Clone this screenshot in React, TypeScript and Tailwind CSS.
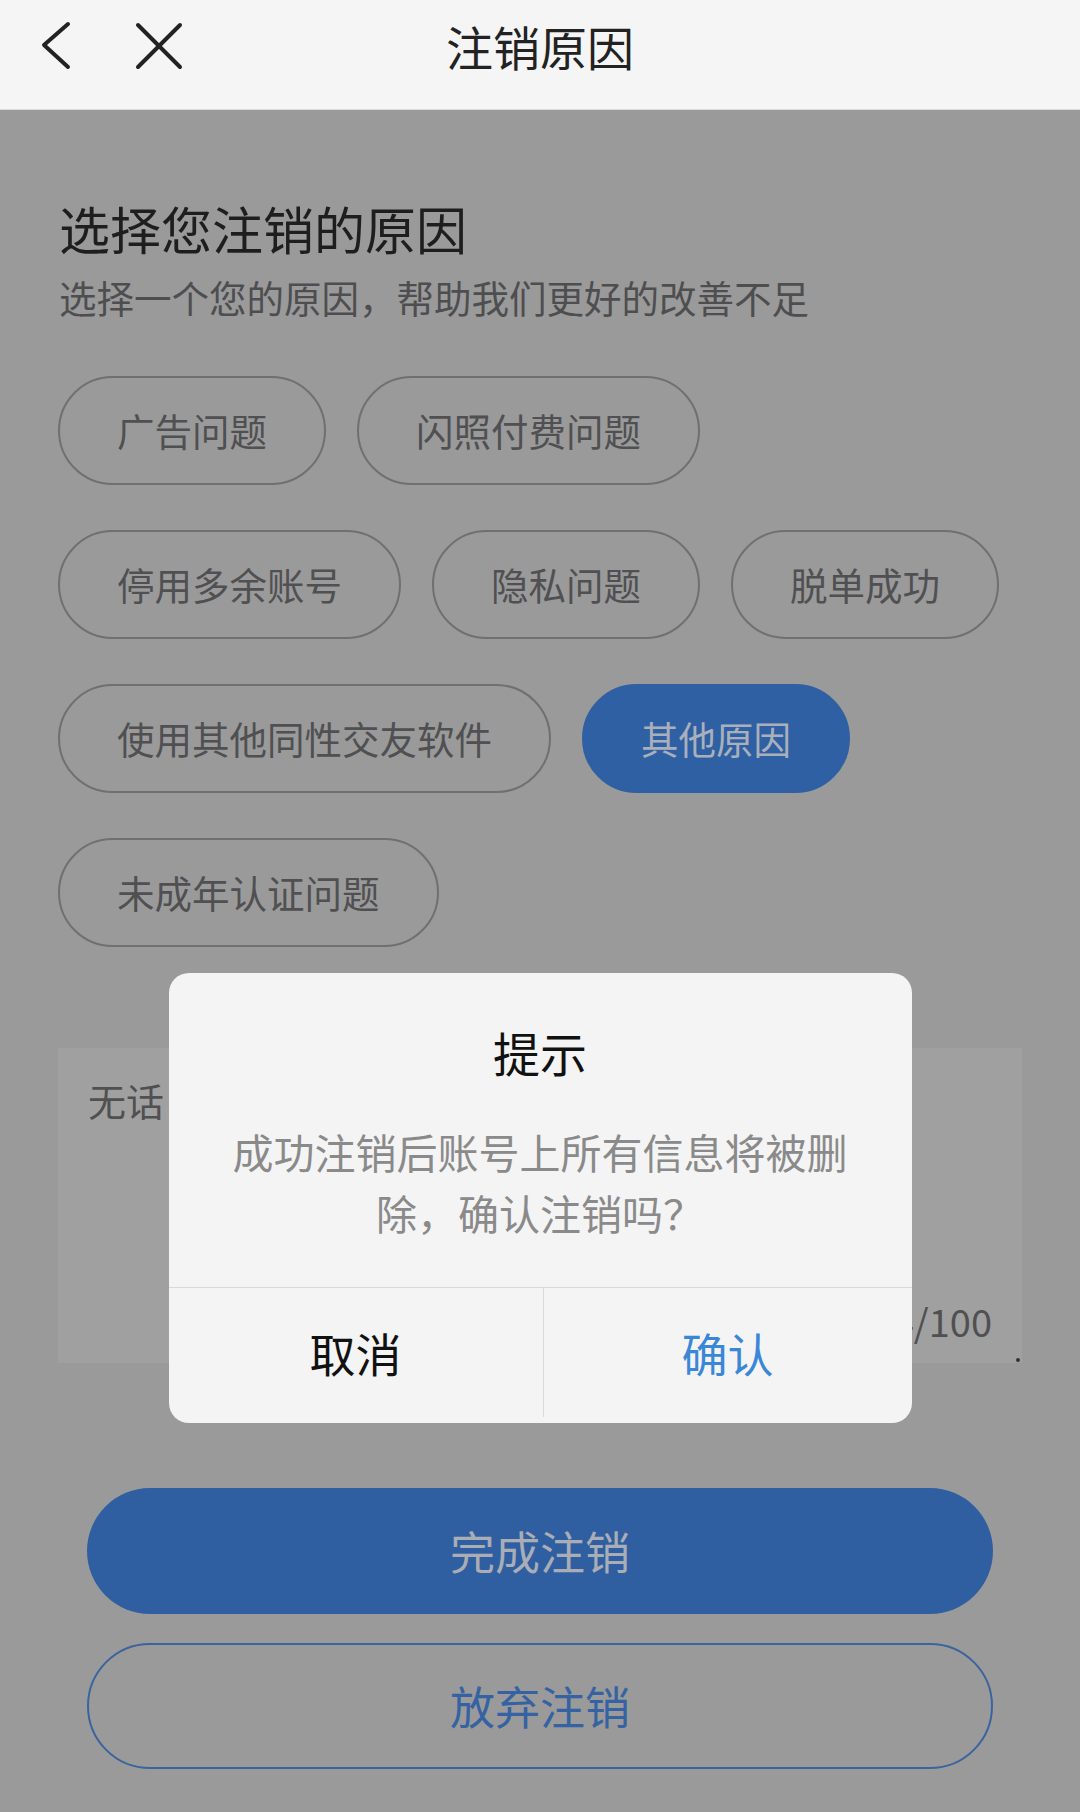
import React from "react";

const FONT = { fontFamily: '"Noto Sans CJK SC", "Noto Sans", sans-serif' };

// reasons shown as pill chips; "其他原因" is the selected one
const REASONS = [
  "广告问题",
  "闪照付费问题",
  "停用多余账号",
  "隐私问题",
  "脱单成功",
  "使用其他同性交友软件",
  "其他原因",
  "未成年认证问题",
];
const SELECTED = "其他原因";

function Header() {
  return (
    <header className="relative flex h-[110px] items-center justify-center border-b border-[#dcdcdc] bg-[#f5f5f5] pb-[18px]">
      <div className="absolute left-[38px] top-[20px] flex items-center gap-[60px]">
        <svg width="36" height="52" viewBox="0 0 36 52" fill="none">
          <polyline
            points="30,4 6,25 30,47"
            stroke="#222"
            strokeWidth="4"
            strokeLinecap="round"
            strokeLinejoin="round"
          />
        </svg>
        <svg width="50" height="50" viewBox="0 0 50 50" fill="none">
          <line x1="4" y1="4" x2="46" y2="46" stroke="#222" strokeWidth="4" strokeLinecap="round" />
          <line x1="46" y1="4" x2="4" y2="46" stroke="#222" strokeWidth="4" strokeLinecap="round" />
        </svg>
      </div>
      <h1 className="text-[47px] leading-[47px] text-[#222]">注销原因</h1>
    </header>
  );
}

function ConfirmDialog() {
  return (
    <div className="absolute inset-0 flex justify-center pt-[973px]">
      <div className="flex h-[450px] w-[743px] flex-col overflow-hidden rounded-[20px] bg-[#f4f4f4]">
        <div className="flex flex-1 flex-col items-center px-[60px] pt-[55px]">
          <h2 className="text-[47px] leading-[47px] text-[#111]">提示</h2>
          <p className="mt-[46px] text-center text-[41px] leading-[61px] text-[#8a8a8a]">
            成功注销后账号上所有信息将被删除，确认注销吗？
          </p>
        </div>
        <div className="flex h-[136px] border-t border-[#d9d9d9] pb-[6px]">
          <button className="flex w-[375px] items-center justify-center border-r border-[#d9d9d9] text-[46px] text-[#111]">
            取消
          </button>
          <button className="flex flex-1 items-center justify-center text-[46px] text-[#3a87d8]">
            确认
          </button>
        </div>
      </div>
    </div>
  );
}

export default function App() {
  return (
    <div className="relative h-[1812px] w-[1080px] overflow-hidden bg-[#9a9a9a]" style={FONT}>
      <Header />

      <main className="px-[58px]">
        <h2 className="pl-[1px] pt-[93px] text-[51px] leading-[51px] text-[#1e1e1e]">
          选择您注销的原因
        </h2>
        <p className="mt-[23px] pl-[1px] text-[37.5px] leading-[39px] text-[#4e4e50]">
          选择一个您的原因，帮助我们更好的改善不足
        </p>

        <div className="mt-[60px] flex flex-wrap gap-x-[31px] gap-y-[45px]">
          {REASONS.map((r) =>
            r === SELECTED ? (
              <button
                key={r}
                className="flex h-[109px] items-center rounded-full border-2 border-[#2f60a3] bg-[#2f60a3] px-[57px] text-[37.5px] text-[#aab0bb]"
              >
                {r}
              </button>
            ) : (
              <button
                key={r}
                className="flex h-[109px] items-center rounded-full border-2 border-[#707070] px-[57px] text-[37.5px] text-[#505052]"
              >
                {r}
              </button>
            )
          )}
        </div>

        <div className="relative mt-[101px] flex h-[315px] flex-col justify-between bg-[#a0a0a0] px-[30px] pb-[22px] pt-[32px]">
          <div className="text-[38px] leading-[40px] text-[#505052]">无话</div>
          <div className="self-end text-[38px] leading-[40px] text-[#505052]">4/100</div>
          <span className="absolute bottom-[1px] right-[2px] h-[4px] w-[4px] rounded-full bg-[#333]" />
        </div>

        <div className="mt-[125px] flex flex-col gap-[29px] px-[29px]">
          <button className="flex h-[126px] items-center justify-center rounded-full bg-[#2f5fa0] text-[45px] text-[#a9adb6]">
            完成注销
          </button>
          <button className="flex h-[126px] items-center justify-center rounded-full border-2 border-[#3a64a0] text-[45px] text-[#3562a2]">
            放弃注销
          </button>
        </div>
      </main>

      <ConfirmDialog />
    </div>
  );
}
